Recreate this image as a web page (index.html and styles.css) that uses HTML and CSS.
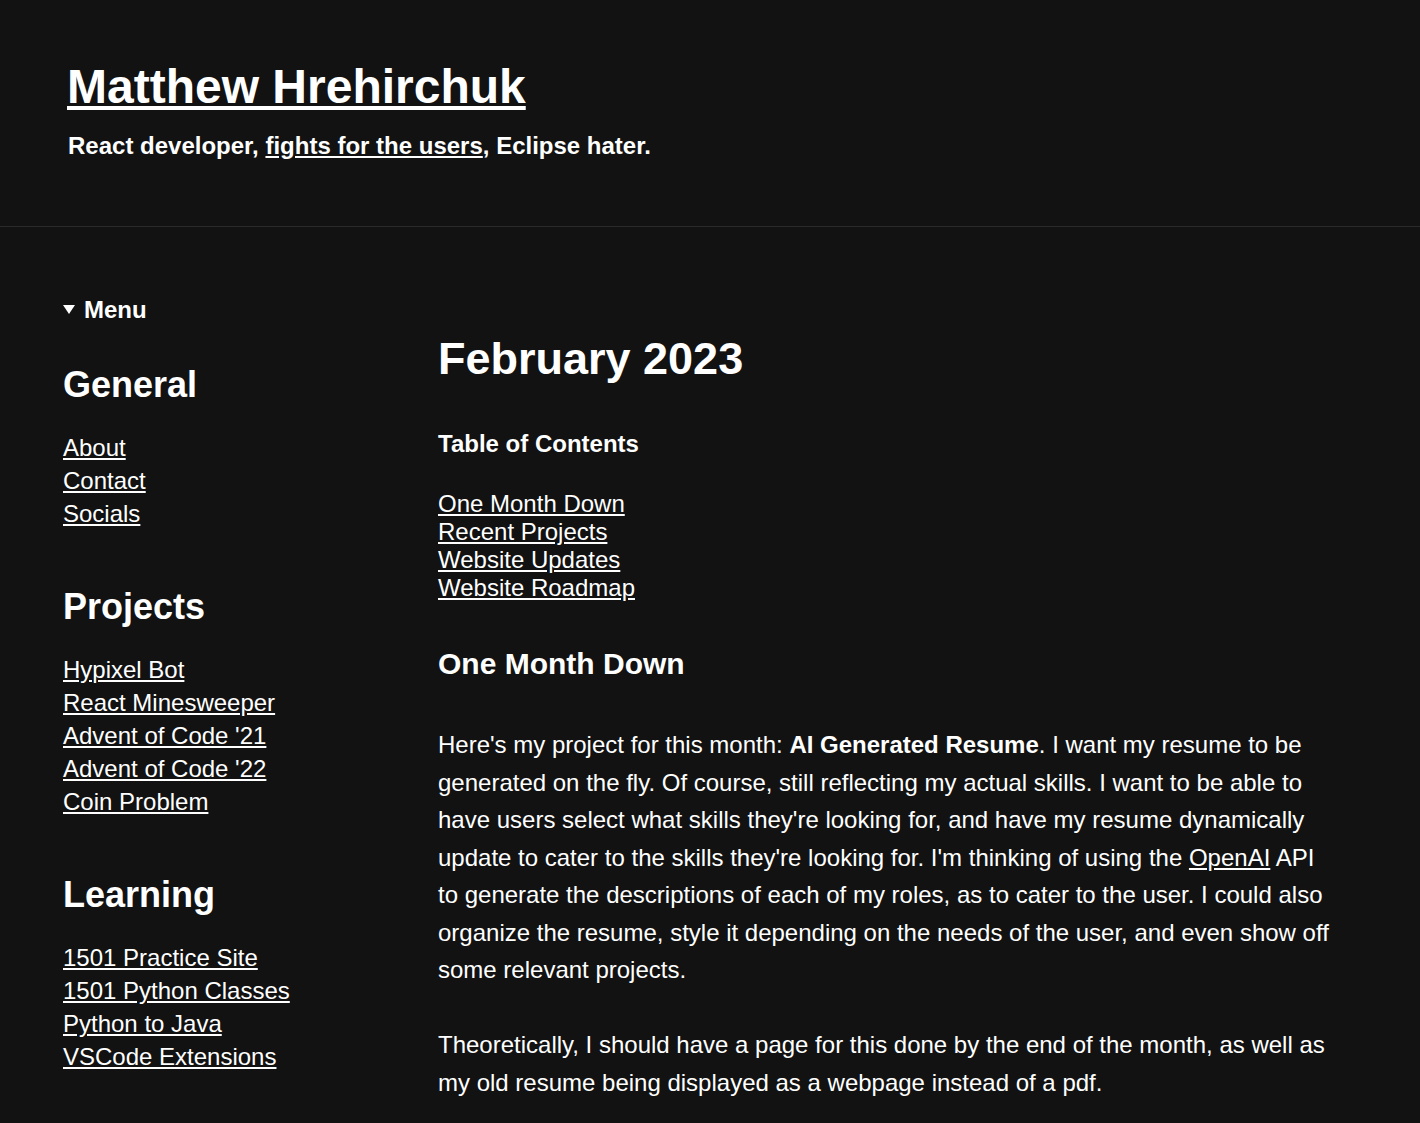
FILE: index.html
```html
<!DOCTYPE html>
<html lang="en">
<head>
<meta charset="utf-8">
<title>February 2023 - Matthew Hrehirchuk</title>
<link rel="stylesheet" href="styles.css">
</head>
<body>
<header class="site-header">
  <h1 class="site-title"><a href="#">Matthew Hrehirchuk</a></h1>
  <p class="tagline">React developer, <a href="#">fights for the users</a>, Eclipse hater.</p>
</header>
<div class="layout">
  <nav class="sidebar">
    <details open>
      <summary><span class="marker"></span>Menu</summary>
      <h2 class="nav-heading first">General</h2>
      <ul class="nav-list">
        <li><a href="#">About</a></li>
        <li><a href="#">Contact</a></li>
        <li><a href="#">Socials</a></li>
      </ul>
      <h2 class="nav-heading">Projects</h2>
      <ul class="nav-list">
        <li><a href="#">Hypixel Bot</a></li>
        <li><a href="#">React Minesweeper</a></li>
        <li><a href="#">Advent of Code '21</a></li>
        <li><a href="#">Advent of Code '22</a></li>
        <li><a href="#">Coin Problem</a></li>
      </ul>
      <h2 class="nav-heading">Learning</h2>
      <ul class="nav-list">
        <li><a href="#">1501 Practice Site</a></li>
        <li><a href="#">1501 Python Classes</a></li>
        <li><a href="#">Python to Java</a></li>
        <li><a href="#">VSCode Extensions</a></li>
      </ul>
    </details>
  </nav>
  <main class="content">
    <h1 class="page-title">February 2023</h1>
    <h3 class="toc-title">Table of Contents</h3>
    <ul class="toc">
      <li><a href="#">One Month Down</a></li>
      <li><a href="#">Recent Projects</a></li>
      <li><a href="#">Website Updates</a></li>
      <li><a href="#">Website Roadmap</a></li>
    </ul>
    <h2 class="section-title">One Month Down</h2>
    <p>Here's my project for this month: <strong>AI Generated Resume</strong>. I want my resume to be generated on the fly. Of course, still reflecting my actual skills. I want to be able to have users select what skills they're looking for, and have my resume dynamically update to cater to the skills they're looking for. I'm thinking of using the <a href="#">OpenAI</a> API to generate the descriptions of each of my roles, as to cater to the user. I could also organize the resume, style it depending on the needs of the user, and even show off some relevant projects.</p>
    <p>Theoretically, I should have a page for this done by the end of the month, as well as my old resume being displayed as a webpage instead of a pdf.</p>
  </main>
</div>
</body>
</html>
```
FILE: styles.css
```css
html, body {
  margin: 0;
  padding: 0;
  background: #121212;
  color: #ffffff;
  font-family: "Liberation Sans", Arial, sans-serif;
}

a {
  color: #ffffff;
  text-decoration: underline;
}

.site-header {
  padding: 59px 0 66px 67px;
  border-bottom: 1px solid #2a2a2a;
}

.site-title {
  margin: 0;
  font-size: 48px;
  line-height: 55px;
  font-weight: bold;
}

.tagline {
  margin: 18px 0 0;
  padding-left: 1px;
  font-size: 24px;
  line-height: 28px;
  font-weight: bold;
}

.layout {
  display: grid;
  grid-template-columns: 375px 900px;
  padding: 69px 0 0 63px;
}

.sidebar summary {
  list-style: none;
  font-size: 24px;
  line-height: 28px;
  font-weight: bold;
  cursor: pointer;
}

.sidebar summary::-webkit-details-marker {
  display: none;
}

.marker {
  display: inline-block;
  width: 0;
  height: 0;
  border-left: 6px solid transparent;
  border-right: 6px solid transparent;
  border-top: 9px solid #ffffff;
  margin-right: 9px;
  vertical-align: 4px;
}

.nav-heading {
  margin: 56px 0 25px;
  font-size: 36px;
  line-height: 42px;
  font-weight: bold;
}

.nav-heading.first {
  margin-top: 40px;
}

.nav-list {
  list-style: none;
  margin: 0;
  padding: 0;
  font-size: 24px;
  line-height: 33px;
}

.content {
  font-size: 24px;
  line-height: 37.5px;
}

.page-title {
  margin: 37px 0 0;
  font-size: 45px;
  line-height: 52px;
  font-weight: bold;
}

.toc-title {
  margin: 45px 0 0;
  font-size: 24px;
  line-height: 28px;
  font-weight: bold;
}

.toc {
  list-style: none;
  margin: 32px 0 0;
  padding: 0;
  line-height: 28px;
}

.section-title {
  margin: 44px 0 0;
  font-size: 30px;
  line-height: 35px;
  font-weight: bold;
}

.content p {
  margin: 45px 0 0;
}

.content p + p {
  margin-top: 37.5px;
}
```
